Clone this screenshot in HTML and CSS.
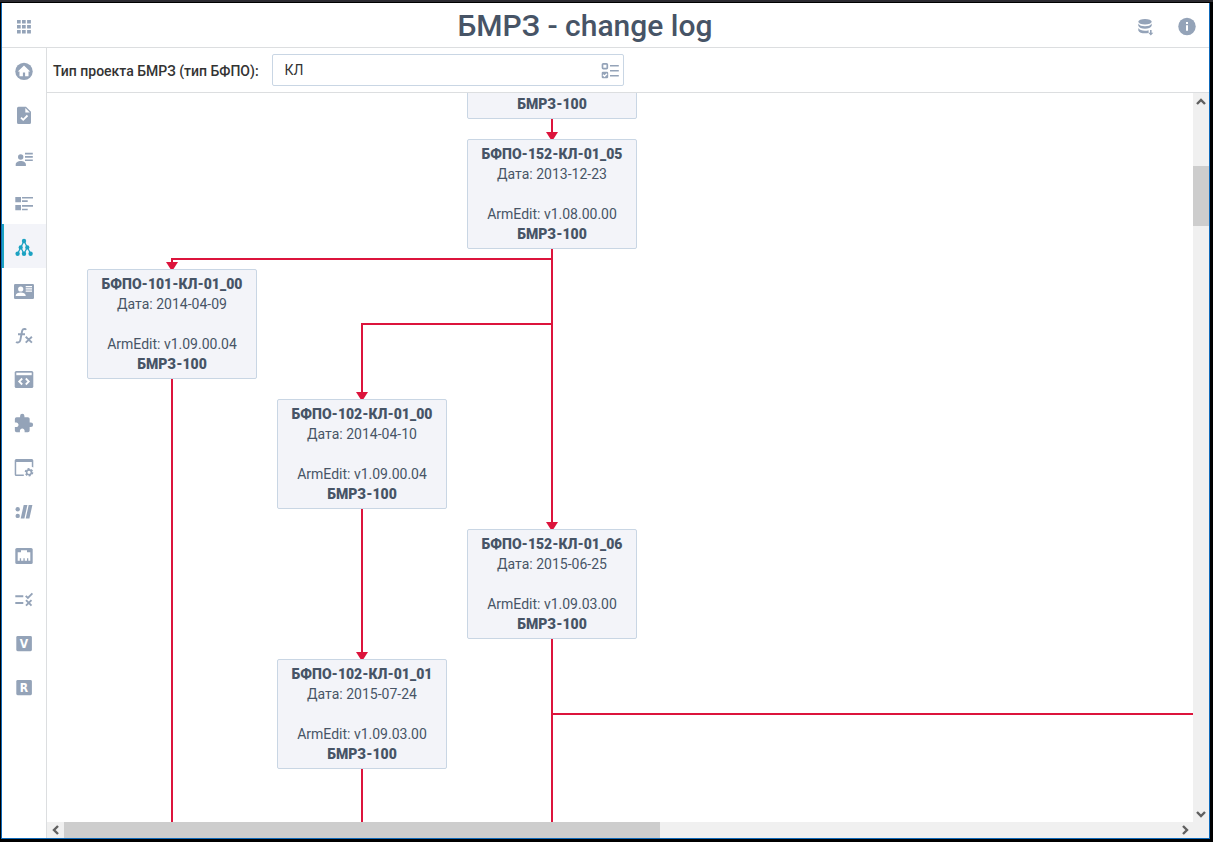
FILE: index.html
```html
<!DOCTYPE html>
<html lang="ru">
<head>
<meta charset="utf-8">
<meta name="viewport" content="width=device-width, initial-scale=1">
<title>БМРЗ - change log</title>
<link rel="stylesheet" href="styles.css">
</head>
<body>
<div class="window">
  <header class="topbar">
    <button class="icon-button" type="button" aria-label="Apps">
      <svg class="icon" viewBox="0 0 20 20"><path d="M3 3h3.7v3.4H3zM8 3h3.7v3.4H8zM13.1 3h3.8v3.4h-3.8zM3 8h3.7v3.4H3zM8 8h3.7v3.4H8zM13.1 8h3.8v3.4h-3.8zM3 13h3.7v3.4H3zM8 13h3.7v3.4H8zM13.1 13h3.8v3.4h-3.8z"/></svg>
    </button>
    <h1 class="title">БМРЗ - change log</h1>
    <div class="actions">
      <button class="icon-button" type="button" aria-label="Download database">
        <svg class="icon" viewBox="0 0 20 20"><ellipse cx="10" cy="4.7" rx="6.7" ry="2.8"/><path d="M3.3 6.5C4.4 8.6 7 9.2 10 9.2s5.600-.6 6.700-2.700v2.300c-.6 2-3.400 2.900-6.700 2.900S3.900 10.800 3.300 8.800zM3.300 11c1.100 2 3.700 2.700 6.700 2.700 1.300 0 2.500-.1 3.600-.5v2.700c-1.100.3-2.300.4-3.600.4-3.300 0-6.100-.9-6.700-2.900z"/><path d="M15 13h1.600v2.800h1.700l-2.500 2.700-2.500-2.700H15z"/></svg>
      </button>
      <button class="icon-button" type="button" aria-label="About">
        <svg class="icon" viewBox="0 0 20 20"><circle cx="10" cy="9.500" r="8.700"/><path class="knock" d="M9 5h2v2H9zM9 8.300h2v5.500H9z"/></svg>
      </button>
    </div>
  </header>

  <div class="body">
    <nav class="sidebar" aria-label="Sections">
      <a class="nav-item" href="#home" aria-label="Home">
        <svg class="icon" viewBox="0 0 20 20"><circle cx="10" cy="10.400" r="8.700"/><path class="knock" d="M10 4.600l6.200 5.800h-1.700v4.800h-3.400v-3.700H8.900v3.700H5.500v-4.800H3.800z"/></svg>
      </a>
      <a class="nav-item" href="#tasks" aria-label="Documents">
        <svg class="icon" viewBox="0 0 20 20"><path d="M4.500 1.800H12l5 5v10.700a1.500 1.500 0 0 1-1.500 1.500h-11A1.500 1.500 0 0 1 3 17.500V3.300a1.500 1.500 0 0 1 1.500-1.500z"/><path class="knock" d="M11.300 3.100v4.400h4.500z"/><path class="knock-line" d="M7 12.600l2.200 2.200 4.300-4.300"/></svg>
      </a>
      <a class="nav-item" href="#users" aria-label="Contacts">
        <svg class="icon" viewBox="0 0 20 20"><circle cx="6.700" cy="8" r="2.700"/><path d="M1.700 16.900v-1.500c0-2.300 2.500-3.500 5.100-3.500s5.100 1.200 5.100 3.500v1.500zM11 3.800h7.800v1.700H11zM11 7.100h7.800v1.700H11zM11 10.400h7.800v1.700H11z"/></svg>
      </a>
      <a class="nav-item" href="#list" aria-label="List">
        <svg class="icon" viewBox="0 0 20 20"><path d="M1.300 4H7v5.300H1.300zM1.300 11.900H7v5.400H1.300zM8 4h11v1.500H8zM8 7.300h5.700v1.600H8zM8 12.100h11v1.700H8zM8 15.800h5.700v1.500H8z"/></svg>
      </a>
      <a class="nav-item nav-item-active" href="#tree" aria-label="Change tree" aria-current="page">
        <svg class="icon" viewBox="0 0 20 20"><path class="line thin" d="M10 4L3.700 16.500M10 4l6.700 12.700M13.300 10.300L10 16.700M6.700 10.300l3.300 6.400"/><circle cx="10" cy="4" r="2.200"/><circle cx="6.700" cy="10.400" r="2.100"/><circle cx="13.300" cy="10.400" r="2.100"/><circle cx="3.600" cy="16.800" r="2.200"/><circle cx="10" cy="16.800" r="2.200"/><circle cx="16.600" cy="16.800" r="2.200"/></svg>
      </a>
      <a class="nav-item" href="#card" aria-label="Card">
        <svg class="icon" viewBox="0 0 20 20"><rect y="3" width="20" height="15" rx="1.200"/><circle class="knock" cx="6.700" cy="8" r="2.600"/><path class="knock" d="M1.700 15v-.5c0-1.900 2.500-2.900 5-2.900s5 1 5 2.900v.5zM11.700 5H18v1.200h-6.300zM11.700 7.300H18v1.200h-6.300zM11.700 9.600H18v1.200h-6.300z"/></svg>
      </a>
      <a class="nav-item" href="#functions" aria-label="Functions">
        <svg class="icon" viewBox="0 0 20 20"><path class="line" d="M12 4.800c-.4-1-3.300-1.400-3.900 1.200L6.300 15.400c-.5 2.400-3 2.600-4.200 1.400M4 9.300h7M11.700 11.700l6.200 5.900M17.900 11.700l-6.200 5.900"/></svg>
      </a>
      <a class="nav-item" href="#code" aria-label="Code">
        <svg class="icon" viewBox="0 0 20 20"><rect x=".7" y="2" width="18.600" height="17" rx="1.600"/><path class="knock" d="M2.300 3.700h15.400v2.500H2.300z"/><path class="knock-line" d="M8.200 9.500L5.200 12.500l3 3M11.800 9.500l3 3-3 3"/></svg>
      </a>
      <a class="nav-item" href="#plugins" aria-label="Plugins">
        <svg class="icon" viewBox="1 0 23 23"><path d="M20.500 11H19V7c0-1.110-.9-2-2-2h-4V3.500a2.500 2.500 0 0 0-5 0V5H4a2 2 0 0 0-2 2v3.800h1.500c1.500 0 2.700 1.200 2.700 2.700S5 16.200 3.500 16.200H2V20a2 2 0 0 0 2 2h3.800v-1.500c0-1.500 1.200-2.700 2.700-2.700s2.700 1.200 2.700 2.700V22H17a2 2 0 0 0 2-2v-4h1.500a2.500 2.500 0 0 0 0-5z"/></svg>
      </a>
      <a class="nav-item" href="#settings" aria-label="Window settings">
        <svg class="icon" viewBox="0 0 20 20"><path d="M2.200 2h15.600a1.500 1.500 0 0 1 1.500 1.500v7.100l-1.500-.9V5H2.200v12.500h7.600V19H2.200A1.500 1.500 0 0 1 .7 17.500v-14A1.500 1.500 0 0 1 2.200 2z"/><circle class="gear" cx="15" cy="15.300" r="3.500"/><circle class="ring" cx="15" cy="15.300" r="2.400"/></svg>
      </a>
      <a class="nav-item" href="#links" aria-label="Addresses">
        <svg class="icon" viewBox="0 0 20 20"><circle cx="3.700" cy="8.300" r="2.200"/><circle cx="3.700" cy="14.900" r="2.200"/><path d="M9.700 4h3.700l-3 13.500H6.700zM14.700 4h3.700l-3 13.500h-3.700z"/></svg>
      </a>
      <a class="nav-item" href="#network" aria-label="Network">
        <svg class="icon" viewBox="0 0 20 20"><rect x="1.300" y="3" width="17.400" height="16" rx="1.600"/><path class="knock" d="M7 5.300h6v2h3.300v8.400h-2v-2.400h-1.300v2.400h-2.300v-2.400H9.400v2.400H7.100v-2.400H5.800v2.400H3.700V7.300H7z"/></svg>
      </a>
      <a class="nav-item" href="#rules" aria-label="Rules">
        <svg class="icon" viewBox="0 0 20 20"><path class="line" d="M1.300 7.200h8M1.300 14h8M11.700 6.800l2.200 2.200 4.500-4.600M12 11.100l5.500 5.500M17.500 11.100L12 16.600"/></svg>
      </a>
      <a class="nav-item" href="#v" aria-label="V">
        <svg class="icon" viewBox="0 0 20 20"><rect x="2.300" y="3" width="15.600" height="15.200" rx="1.400"/><text class="letter" x="10" y="15">V</text></svg>
      </a>
      <a class="nav-item" href="#r" aria-label="R">
        <svg class="icon" viewBox="0 0 20 20"><rect x="2.300" y="3" width="15.600" height="15.200" rx="1.400"/><text class="letter" x="10" y="15">R</text></svg>
      </a>
    </nav>

    <main class="content">
      <div class="filter">
        <label class="filter-label" for="project-type">Тип проекта БМРЗ (тип БФПО):</label>
        <div class="picker">
          <input class="picker-input" id="project-type" type="text" value="КЛ">
          <button class="picker-button" type="button" aria-label="Choose type">
            <svg class="icon" viewBox="0 0 20 20"><rect class="box" x="2.500" y="3.800" width="4.800" height="4.800" rx=".8"/><rect x="1.700" y="11.700" width="6.500" height="6.500" rx="1.200"/><path class="knock-line thin" d="M3 14.800l1.500 1.500 2.500-2.600"/><path d="M10 5h8.800v1.500H10zM10 10h8.800v1.500H10zM10 15h8.800v1.500H10z"/></svg>
          </button>
        </div>
      </div>

      <div class="viewport">
        <div class="canvas">
          <svg class="edges" aria-hidden="true">
            <defs>
              <marker id="arrow" markerUnits="userSpaceOnUse" markerWidth="12" markerHeight="12" refX="7" refY="6" orient="auto"><path class="arrow" d="M0 0L7 4.500V7.500L0 12z"/></marker>
            </defs>
            <path class="edge edge-arrow" d="M505 26V46"/>
            <path class="edge edge-arrow" d="M505 156V436"/>
            <path class="edge edge-arrow" d="M505 166H125V176"/>
            <path class="edge edge-arrow" d="M505 231H315V306"/>
            <path class="edge edge-arrow" d="M315 416V566"/>
            <path class="edge" d="M125 286V3000"/>
            <path class="edge" d="M315 676V3000"/>
            <path class="edge" d="M505 546V3000"/>
            <path class="edge" d="M505 621H3000"/>
          </svg>
          <article class="node node-first"><b>БМРЗ-100</b></article>
          <article class="node node-152-05"><b>БФПО-152-КЛ-01_05</b><span>Дата: 2013-12-23</span><span class="node-version">ArmEdit: v1.08.00.00</span><b>БМРЗ-100</b></article>
          <article class="node node-101-00"><b>БФПО-101-КЛ-01_00</b><span>Дата: 2014-04-09</span><span class="node-version">ArmEdit: v1.09.00.04</span><b>БМРЗ-100</b></article>
          <article class="node node-102-00"><b>БФПО-102-КЛ-01_00</b><span>Дата: 2014-04-10</span><span class="node-version">ArmEdit: v1.09.00.04</span><b>БМРЗ-100</b></article>
          <article class="node node-152-06"><b>БФПО-152-КЛ-01_06</b><span>Дата: 2015-06-25</span><span class="node-version">ArmEdit: v1.09.03.00</span><b>БМРЗ-100</b></article>
          <article class="node node-102-01"><b>БФПО-102-КЛ-01_01</b><span>Дата: 2015-07-24</span><span class="node-version">ArmEdit: v1.09.03.00</span><b>БМРЗ-100</b></article>
        </div>
        <div class="scroll scroll-v">
          <button class="scroll-button" type="button" aria-label="Scroll up"><svg class="chevron" viewBox="0 0 10 10"><path d="M1 7l4-4 4 4"/></svg></button>
          <div class="track"><div class="thumb" style="margin-top:56px;height:60px"></div></div>
          <button class="scroll-button" type="button" aria-label="Scroll down"><svg class="chevron" viewBox="0 0 10 10"><path d="M1 3l4 4 4-4"/></svg></button>
        </div>
        <div class="scroll scroll-h">
          <button class="scroll-button" type="button" aria-label="Scroll left"><svg class="chevron" viewBox="0 0 10 10"><path d="M7 1L3 5l4 4"/></svg></button>
          <div class="track"><div class="thumb" style="width:53.6%"></div></div>
          <button class="scroll-button" type="button" aria-label="Scroll right"><svg class="chevron" viewBox="0 0 10 10"><path d="M3 1l4 4-4 4"/></svg></button>
        </div>
        <div class="corner"></div>
      </div>
    </main>
  </div>
</div>
</body>
</html>
```
FILE: styles.css
```css
:root {
  --text: #475466;
  --icon: #94a3b8;
  --line: #dcdee0;
  --outline: #c9d6e4;
  --panel: #f3f4f9;
  --accent: #1ca2c2;
  --edge: #dc143c;
}

* { box-sizing: border-box; }

body {
  margin: 0;
  height: 100vh;
  padding: 1px 3px 3px 1px;
  border-top: 2px solid #2b2a30;
  background: #000;
  color: var(--text);
  font: 14px/20px Roboto, "Noto Sans", sans-serif;
}

button {
  padding: 0;
  border: 0;
  background: none;
}

.window {
  display: flex;
  flex-direction: column;
  height: 100%;
  border: 1px solid #0f69b9;
  border-top: 0;
  background: #fff;
}

.icon {
  display: block;
  width: 20px;
  height: 20px;
  fill: var(--icon);
  stroke: none;
}

.icon .knock { fill: #fff; }
.icon .knock-line { fill: none; stroke: #fff; stroke-width: 1.8; }
.icon .line { fill: none; stroke: var(--icon); stroke-width: 1.9; }
.icon .thin { stroke-width: 1.3; }
.icon .box { fill: none; stroke: var(--icon); stroke-width: 1.7; }
.icon .gear { fill: none; stroke: var(--icon); stroke-width: 1.6; stroke-dasharray: 1.9 1.765; }
.icon .ring { fill: none; stroke: var(--icon); stroke-width: 1.6; }

.icon .letter {
  fill: #fff;
  font: bold 12px "Liberation Sans Narrow", "DejaVu Sans Condensed", sans-serif;
  text-anchor: middle;
}

.topbar {
  display: flex;
  flex: none;
  height: 45px;
  border-bottom: 1px solid var(--line);
}

.icon-button {
  display: grid;
  place-items: center;
  width: 44px;
  padding-top: 4px;
}

.title {
  flex: 1;
  margin: 0;
  font-size: 30px;
  font-weight: 500;
  line-height: 46px;
  text-align: center;
}

.actions {
  display: flex;
  padding-right: 1px;
}

.actions .icon-button { width: 42px; }

.body {
  display: flex;
  flex: 1;
  min-height: 0;
}

.sidebar {
  flex: none;
  width: 45px;
  border-right: 1px solid var(--line);
}

.nav-item {
  display: grid;
  place-items: center;
  height: 44px;
  padding-top: 2px;
}

.nav-item-active {
  --icon: var(--accent);
  background: var(--panel);
  box-shadow: inset 2px 0 var(--accent);
}

.content {
  display: flex;
  flex: 1;
  flex-direction: column;
  min-width: 0;
}

.filter {
  display: flex;
  flex: none;
  align-items: center;
  gap: 13px;
  height: 45px;
  padding-left: 6px;
  border-bottom: 1px solid var(--line);
}

.filter-label {
  padding-top: 2px;
  color: #333;
  font-weight: 500;
}

.picker {
  display: flex;
  width: 352px;
  height: 32px;
  border: 1px solid var(--outline);
  border-radius: 2px;
}

.picker-input {
  flex: 1;
  min-width: 0;
  padding: 0 12px;
  border: 0;
  outline: 0;
  background: none;
  color: #333;
  font: inherit;
}

.picker-button {
  display: grid;
  place-items: center;
  width: 26px;
}

.viewport {
  display: grid;
  flex: 1;
  grid-template: minmax(0, 1fr) 16px / minmax(0, 1fr) 16px;
  min-height: 0;
}

.canvas {
  position: relative;
  overflow: hidden;
}

.edges {
  position: absolute;
  inset: 0;
  width: 100%;
  height: 100%;
}

.edge { fill: none; stroke: var(--edge); stroke-width: 2; }
.edge-arrow { marker-end: url(#arrow); }
.arrow { fill: var(--edge); }

.node {
  position: absolute;
  display: flex;
  flex-direction: column;
  align-items: center;
  justify-content: flex-end;
  width: 170px;
  height: 110px;
  padding: 4px;
  border: 1px solid var(--outline);
  border-radius: 2px;
  background: var(--panel);
  white-space: nowrap;
}

.node b { font-weight: 900; }
.node-version { margin-top: 20px; }

.node-first { left: 420px; top: -84px; }
.node-152-05 { left: 420px; top: 46px; }
.node-101-00 { left: 40px; top: 176px; }
.node-102-00 { left: 230px; top: 306px; }
.node-152-06 { left: 420px; top: 436px; }
.node-102-01 { left: 230px; top: 566px; }

.scroll {
  display: flex;
  background: #f0f0f0;
}

.scroll-v { flex-direction: column; }
.scroll-v .thumb { width: 100%; }
.scroll-h .thumb { height: 100%; }

.scroll-button {
  display: grid;
  flex: none;
  place-items: center;
  width: 16px;
  height: 16px;
}

.scroll-v .scroll-button { height: 17px; }
.scroll-h .scroll-button { width: 17px; }

.track {
  display: flow-root;
  flex: 1;
}

.thumb { background: #cdcdcd; }

.chevron {
  width: 10px;
  height: 10px;
  fill: none;
  stroke: #606060;
  stroke-width: 2.4;
}

.corner { background: #f0f0f0; }
```
